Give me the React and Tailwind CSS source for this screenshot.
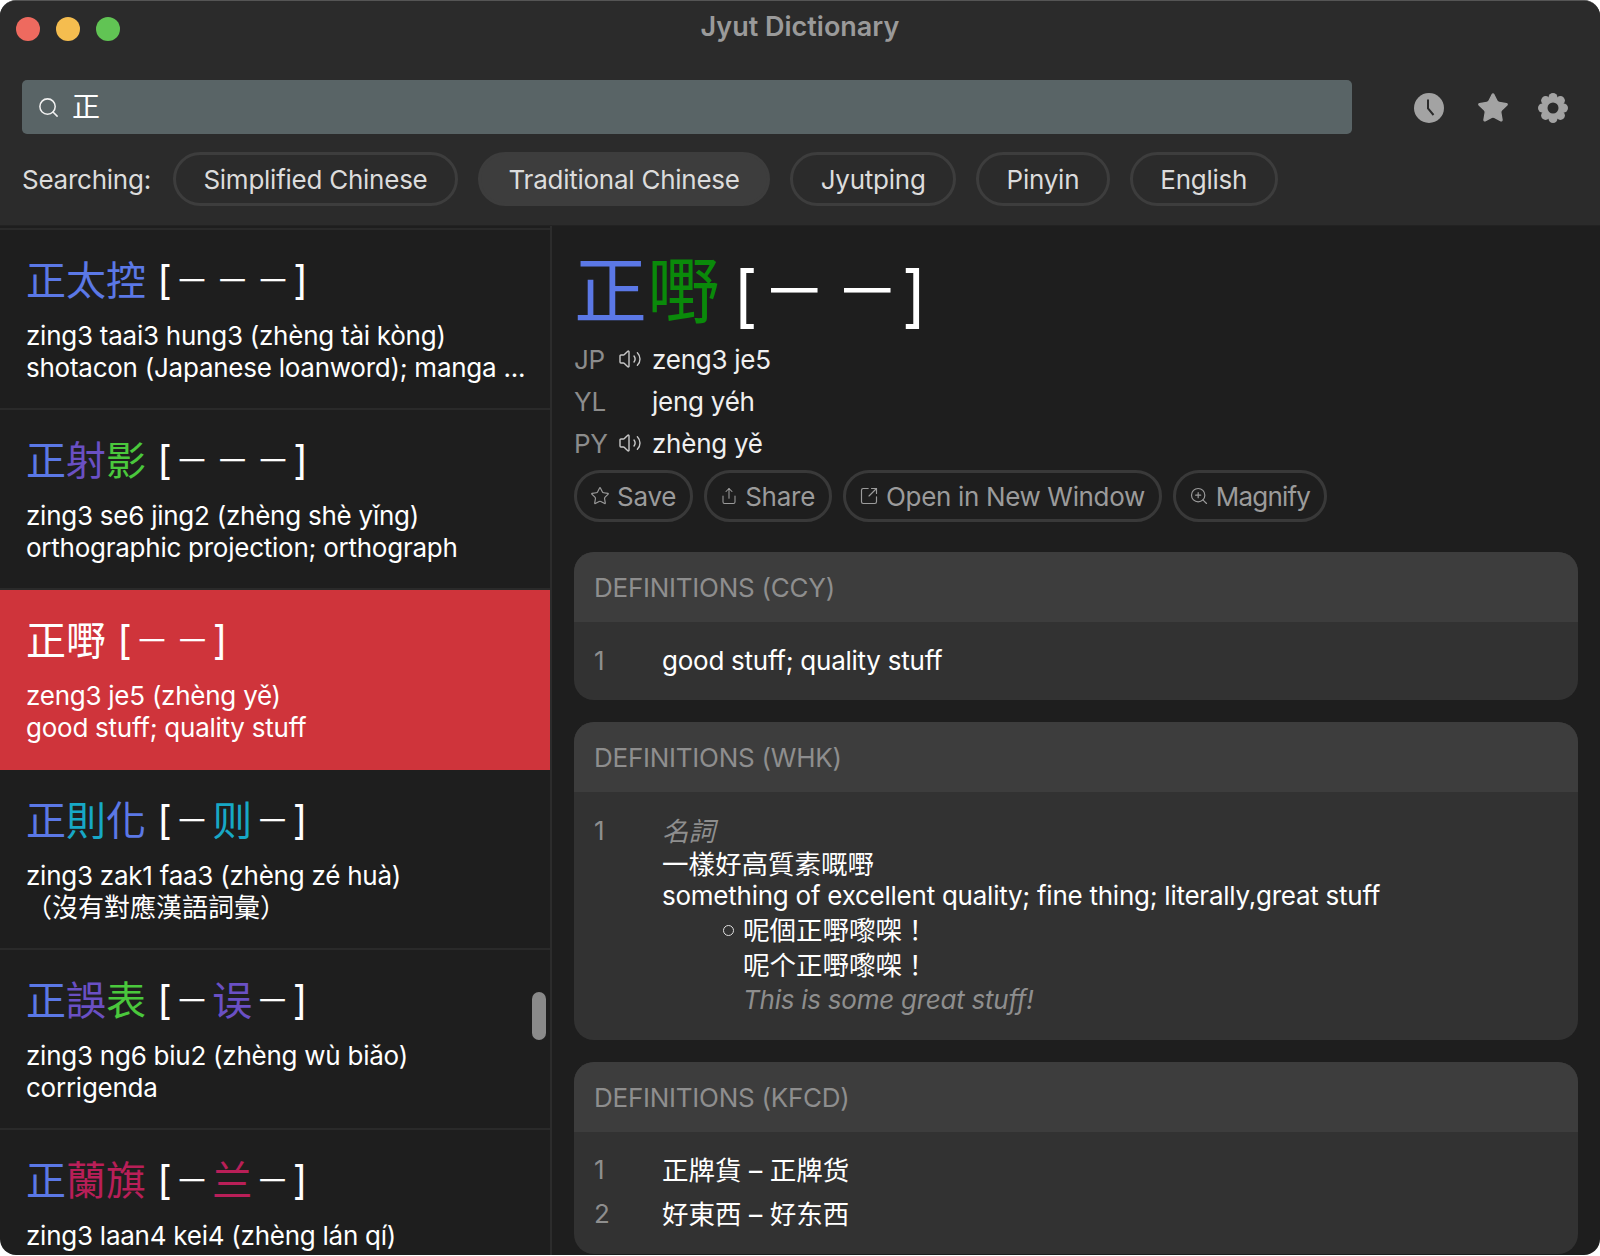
import React from "react";
import { Star, Share, SquareArrowOutUpRight, ZoomIn, Volume2, Search } from "lucide-react";

const BLUE = "text-[#5b78e6]";
const PURPLE = "text-[#6a50c4]";
const GREEN = "text-[#4ac83c]";
const CYAN = "text-[#17a8c6]";
const CRIMSON = "text-[#b91f58]";
const DASH = "inline-block w-[40.5px] text-center text-[34px] align-[2px]";

const rows = [
  { t: [["正", BLUE], ["太", BLUE], ["控", BLUE]], b: [["－", DASH], ["－", DASH], ["－", DASH]], l1: "zing3 taai3 hung3 (zhèng tài kòng)", l2: "shotacon (Japanese loanword); manga ..." },
  { t: [["正", BLUE], ["射", PURPLE], ["影", GREEN]], b: [["－", DASH], ["－", DASH], ["－", DASH]], l1: "zing3 se6 jing2 (zhèng shè yǐng)", l2: "orthographic projection; orthograph" },
  { t: [["正", ""], ["嘢", ""]], b: [["－", DASH], ["－", DASH]], l1: "zeng3 je5 (zhèng yě)", l2: "good stuff; quality stuff", active: true },
  { t: [["正", BLUE], ["則", CYAN], ["化", BLUE]], b: [["－", DASH], ["则", CYAN], ["－", DASH]], l1: "zing3 zak1 faa3 (zhèng zé huà)", l2: "（沒有對應漢語詞彙）", l2Class: "text-[26.5px] tracking-normal" },
  { t: [["正", BLUE], ["誤", PURPLE], ["表", GREEN]], b: [["－", DASH], ["误", PURPLE], ["－", DASH]], l1: "zing3 ng6 biu2 (zhèng wù biǎo)", l2: "corrigenda" },
  { t: [["正", BLUE], ["蘭", CRIMSON], ["旗", CRIMSON]], b: [["－", DASH], ["兰", CRIMSON], ["－", DASH]], l1: "zing3 laan4 kei4 (zhèng lán qí)", l2: "" },
];

function Chars({ items }) {
  return items.map(([c, cls], i) => (
    <span key={i} className={cls}>{c}</span>
  ));
}

function Row({ r }) {
  return (
    <div className={`shrink-0 pl-[26px] pt-[28px] text-white ${r.active ? "h-[180px] bg-[#cf343b]" : "h-[178px]"}`}>
      <div className="h-[46px] text-[40px] leading-[46px] tracking-normal whitespace-nowrap">
        <Chars items={r.t} /> [<Chars items={r.b} />]
      </div>
      <div className="mt-[16px] text-[26px] leading-[32.5px] whitespace-nowrap">{r.l1}</div>
      <div className={`-mt-[1px] text-[26px] leading-[32.5px] whitespace-nowrap ${r.l2Class || ""}`}>{r.l2}</div>
    </div>
  );
}

function Pill({ children, active }) {
  return (
    <div className={`h-[54px] px-[27.5px] pt-[1px] flex items-center rounded-full border-[3px] border-[#3d3d3d] text-[26px] text-[#dcdcdc] whitespace-nowrap ${active ? "bg-[#3d3d3d]" : ""}`}>
      {children}
    </div>
  );
}

function ActionButton({ icon, children, textClass = "" }) {
  return (
    <div className="h-[52px] pl-[13px] pr-[14px] flex items-center gap-[7px] rounded-full border-[3px] border-[#393939] text-[26px] text-[#9b9b9b] whitespace-nowrap">
      {icon}
      <span className={textClass}>{children}</span>
    </div>
  );
}

function Pron({ label, sound, value }) {
  return (
    <div className="flex items-center h-[42px]">
      <span className="w-[44px] text-[#8c8c8c]">{label}</span>
      <span className="w-[34px] flex items-center">
        {sound && <Volume2 size={24} strokeWidth={1.4} className="text-[#c8c8c8]" />}
      </span>
      <span className="text-[#f0f0f0]">{value}</span>
    </div>
  );
}

function Card({ title, children }) {
  return (
    <div className="rounded-[20px] overflow-hidden bg-[#323232] shrink-0">
      <div className="h-[70px] bg-[#3d3d3d] flex items-center px-[20px] pt-[1px] text-[#8e8e8e]">{title}</div>
      <div className="px-[20px] pt-[22px] pb-[22px] text-white leading-[34px]">{children}</div>
    </div>
  );
}

function Def({ n, children }) {
  return (
    <div className="flex">
      <span className="w-[68px] shrink-0 text-[#8e8e8e]">{n}</span>
      <div className="min-w-0">{children}</div>
    </div>
  );
}

const CJK = "text-[26.5px] tracking-normal";

export default function App() {
  return (
    <div className="w-[1600px] h-[1256px] bg-white overflow-hidden tracking-[-0.25px] font-['Inter','Noto_Sans_CJK_TC',sans-serif]">
      <div className="h-[1255px] rounded-[16px] overflow-hidden flex flex-col bg-[#1e1e1e] border-t border-[#555555]">
        <header className="h-[225px] shrink-0 bg-[#2b2b2b] border-b border-[#222222] px-[22px]">
          <div className="h-[53px] grid grid-cols-3 items-center">
            <div className="flex items-center gap-[16px] -ml-[6px] mt-[2px]">
              <span className="w-[24px] h-[24px] rounded-full bg-[#ee6a5f]" />
              <span className="w-[24px] h-[24px] rounded-full bg-[#f5bd4f]" />
              <span className="w-[24px] h-[24px] rounded-full bg-[#61c454]" />
            </div>
            <div className="text-center text-[27px] font-semibold tracking-normal text-[#9a9a9a] whitespace-nowrap">Jyut Dictionary</div>
            <div />
          </div>
          <div className="mt-[26px] flex items-center">
            <div className="w-[1330px] h-[54px] rounded-[5px] bg-[#596466] flex items-center pl-[15px] gap-[12px] text-white">
              <Search size={23} strokeWidth={1.6} className="text-[#f0f0f0]" />
              <span className="text-[28px] tracking-normal">正</span>
            </div>
            <div className="ml-[62px] mt-[2px] flex items-center">
              <svg width="30" height="30" viewBox="0 0 30 30">
                <circle cx="15" cy="15" r="15" fill="#a3a3a3" />
                <path d="M14 6.5 V15.5 L19.5 22" fill="none" stroke="#2b2b2b" strokeWidth="2" />
              </svg>
              <Star size={34} fill="#a3a3a3" stroke="#a3a3a3" strokeWidth={1} className="ml-[32px]" />
              <svg width="30" height="30" viewBox="0 0 30 30" className="ml-[28px]">
                <g fill="#a3a3a3">
                  <circle cx="15" cy="15" r="11" />
                  <circle cx="15" cy="4.5" r="4.5" />
                  <circle cx="15" cy="25.5" r="4.5" />
                  <circle cx="4.5" cy="15" r="4.5" />
                  <circle cx="25.5" cy="15" r="4.5" />
                  <circle cx="7.6" cy="7.6" r="4.5" />
                  <circle cx="22.4" cy="7.6" r="4.5" />
                  <circle cx="7.6" cy="22.4" r="4.5" />
                  <circle cx="22.4" cy="22.4" r="4.5" />
                </g>
                <circle cx="15" cy="15" r="5.5" fill="#2b2b2b" />
              </svg>
            </div>
          </div>
          <div className="mt-[18px] flex items-center gap-[20px]">
            <span className="text-[26px] text-[#dcdcdc] mr-[2px] whitespace-nowrap">Searching:</span>
            <Pill>Simplified Chinese</Pill>
            <Pill active>Traditional Chinese</Pill>
            <Pill>Jyutping</Pill>
            <Pill>Pinyin</Pill>
            <Pill>English</Pill>
          </div>
        </header>
        <div className="flex-1 min-h-0 flex">
          <aside className="relative w-[552px] shrink-0 pt-[2px] border-r-2 border-[#2c2c2c] overflow-hidden flex flex-col">
            {rows.map((r, i) => (
              <React.Fragment key={i}>
                {!(i > 0 && rows[i - 1].active) && <div className="h-[2px] shrink-0 bg-[#2a2a2a]" />}
                <Row r={r} />
              </React.Fragment>
            ))}
            <div className="absolute left-[532px] top-[766px] w-[14px] h-[48px] rounded-full bg-[#8a8a8a]" />
          </aside>
          <main className="flex-1 min-w-0 px-[22px] overflow-hidden text-[26px]">
            <div className="h-[104px] pt-[19px] text-[73px] leading-[92px] tracking-normal text-white whitespace-nowrap">
              <span className="text-[#5b78e6]">正</span>
              <span className="text-[#0a8a0a]">嘢</span>
              <span className="text-[68px] ml-[13px] align-[-3px]">[</span>
              <span className="inline-block w-[73px] text-center text-[64px] align-[3px]">－</span>
              <span className="inline-block w-[73px] text-center text-[64px] align-[3px]">－</span>
              <span className="text-[68px] -ml-[2px] align-[-3px]">]</span>
            </div>
            <div className="mt-[8px]">
              <Pron label="JP" sound value="zeng3 je5" />
              <Pron label="YL" value="jeng yéh" />
              <Pron label="PY" sound value="zhèng yě" />
            </div>
            <div className="mt-[6px] flex items-center gap-[11px]">
              <ActionButton icon={<Star size={20} strokeWidth={1.4} />}>Save</ActionButton>
              <ActionButton icon={<Share size={18} strokeWidth={1.4} />}>Share</ActionButton>
              <ActionButton icon={<SquareArrowOutUpRight size={20} strokeWidth={1.4} />} textClass="tracking-[-0.35px]">Open in New Window</ActionButton>
              <ActionButton icon={<ZoomIn size={20} strokeWidth={1.4} />} textClass="tracking-[-0.8px]">Magnify</ActionButton>
            </div>
            <div className="mt-[30px] flex flex-col gap-[22px]">
              <Card title="DEFINITIONS (CCY)">
                <Def n="1">good stuff; quality stuff</Def>
              </Card>
              <Card title="DEFINITIONS (WHK)">
                <Def n="1">
                  <div className={`italic text-[#8e8e8e] ${CJK}`}>名詞</div>
                  <div className={`-mt-[1px] ${CJK}`}>一樣好高質素嘅嘢</div>
                  <div className="whitespace-nowrap -mt-[2px]">something of excellent quality; fine thing; literally,great stuff</div>
                  <div className={`flex ml-[61px] ${CJK}`}>
                    <span className="w-[20px] shrink-0 flex items-center">
                      <span className="w-[11px] h-[11px] rounded-full border border-[#e0e0e0]" />
                    </span>
                    <span>呢個正嘢嚟㗎！</span>
                  </div>
                  <div className={`ml-[81px] mt-[1px] ${CJK}`}>呢个正嘢嚟㗎！</div>
                  <div className="ml-[81px] mt-[1px] mb-[1px] italic text-[#8e8e8e]">This is some great stuff!</div>
                </Def>
              </Card>
              <Card title="DEFINITIONS (KFCD)">
                <div className="flex flex-col gap-[9px] -mt-[1px]">
                  <Def n="1"><span className={CJK}>正牌貨 – 正牌货</span></Def>
                  <Def n="2"><span className={CJK}>好東西 – 好东西</span></Def>
                </div>
              </Card>
            </div>
          </main>
        </div>
      </div>
    </div>
  );
}
